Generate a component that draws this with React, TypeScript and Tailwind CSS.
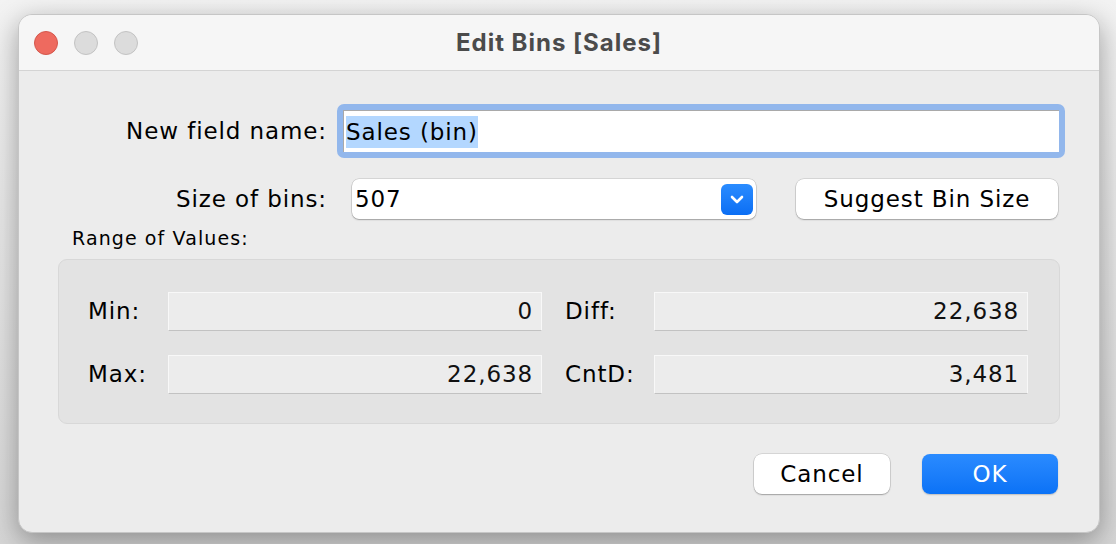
import React from "react";

const body = { fontFamily: '"DejaVu Sans", "Liberation Sans", sans-serif' };

function ReadField({ value }: { value: string }) {
  return (
    <div className="flex h-[39px] w-[374px] items-center justify-end border border-[#f8f8f8] border-b-[#c2c2c2] bg-[#ececec] pr-[8px] text-[23px] tracking-[0.9px] text-[#111]">
      {value}
    </div>
  );
}

export default function App() {
  return (
    <div className="h-[544px] w-[1116px] overflow-hidden bg-gradient-to-b from-[#f3f3f3] to-[#d6d6d6] pl-[18px] pt-[14px]" style={body}>
      <div className="h-[519px] w-[1082px] overflow-hidden rounded-[14px] border border-[#c6c6c6] bg-[#ececec] shadow-[0_8px_28px_rgba(0,0,0,0.35)]">
        {/* title bar */}
        <div className="relative flex h-[56px] items-center border-b border-[#d4d4d4] bg-[#f6f6f6]">
          <div className="flex gap-[16px] pl-[15px]">
            <span className="h-[24px] w-[24px] rounded-full border border-[#d4574c] bg-[#ee6a5f]" />
            <span className="h-[24px] w-[24px] rounded-full border border-[#c3c3c3] bg-[#dcdcdc]" />
            <span className="h-[24px] w-[24px] rounded-full border border-[#c3c3c3] bg-[#dcdcdc]" />
          </div>
          <div
            className="absolute inset-0 flex items-center justify-center text-[24px] font-bold tracking-[1px] text-[#4b4b4b]"
            style={{ fontFamily: "Inter, sans-serif" }}
          >
            Edit Bins [Sales]
          </div>
        </div>

        {/* new field name */}
        <div className="mt-[33px] flex items-center">
          <div className="w-[308px] text-right text-[23px] tracking-[0.9px] text-black">New field name:</div>
          <div className="ml-[10px] h-[54px] w-[728px] rounded-[7px] bg-[#92b7ec] p-[6px]">
            <div className="flex h-full items-center border-t border-l border-[#a9a9a9] bg-white pl-[2px]">
              <span className="bg-[#b3d7ff] text-[23px] leading-[32px] tracking-[0.9px] text-black">Sales (bin)</span>
            </div>
          </div>
        </div>

        {/* size of bins */}
        <div className="mt-[21px] flex items-center">
          <div className="w-[308px] text-right text-[23px] tracking-[0.9px] text-black">Size of bins:</div>
          <div className="ml-[25px] flex h-[40px] w-[404px] items-center justify-between rounded-[7px] bg-white pl-[3px] pr-[3px] shadow-[0_0_0_0.5px_rgba(0,0,0,0.18),0_1px_1.5px_rgba(0,0,0,0.25)]">
            <span className="text-[23px] tracking-[0.9px] text-black">507</span>
            <span className="flex h-[31px] w-[32px] items-center justify-center rounded-[6px] bg-gradient-to-b from-[#2a8cff] to-[#0a6ef4]">
              <svg width="14" height="9" viewBox="0 0 14 9" fill="none">
                <path d="M2 2l5 5 5-5" stroke="white" strokeWidth="2.6" strokeLinecap="round" strokeLinejoin="round" />
              </svg>
            </span>
          </div>
          <button className="ml-[40px] flex h-[40px] w-[262px] items-center justify-center rounded-[8px] bg-white text-[23px] tracking-[0.9px] text-black shadow-[0_0_0_0.5px_rgba(0,0,0,0.18),0_1px_1.5px_rgba(0,0,0,0.25)]">
            Suggest Bin Size
          </button>
        </div>

        {/* range of values */}
        <div className="mt-[9px] pl-[53px] text-[19px] leading-[20px] tracking-[1.1px] text-black">Range of Values:</div>
        <div className="ml-[39px] mt-[11px] h-[165px] w-[1002px] rounded-[9px] border border-[#d8d8d8] bg-[#e3e3e3] pl-[29px] pt-[32px]">
          <div className="flex items-center">
            <div className="w-[80px] text-[23px] tracking-[0.9px] text-black">Min:</div>
            <ReadField value="0" />
            <div className="ml-[23px] w-[89px] text-[23px] tracking-[0.9px] text-black">Diff:</div>
            <ReadField value="22,638" />
          </div>
          <div className="mt-[24px] flex items-center">
            <div className="w-[80px] text-[23px] tracking-[0.9px] text-black">Max:</div>
            <ReadField value="22,638" />
            <div className="ml-[23px] w-[89px] text-[23px] tracking-[0.9px] text-black">CntD:</div>
            <ReadField value="3,481" />
          </div>
        </div>

        {/* buttons */}
        <div className="mt-[30px] flex justify-end gap-[32px] pr-[41px]">
          <button className="flex h-[40px] w-[136px] items-center justify-center rounded-[8px] bg-white text-[23px] tracking-[0.9px] text-black shadow-[0_0_0_0.5px_rgba(0,0,0,0.18),0_1px_1.5px_rgba(0,0,0,0.25)]">
            Cancel
          </button>
          <button className="flex h-[40px] w-[136px] items-center justify-center rounded-[8px] bg-gradient-to-b from-[#2a8bff] to-[#0a72f6] text-[23px] tracking-[0.9px] text-white shadow-[0_1px_1.5px_rgba(0,0,0,0.2)]">
            OK
          </button>
        </div>
      </div>
    </div>
  );
}
